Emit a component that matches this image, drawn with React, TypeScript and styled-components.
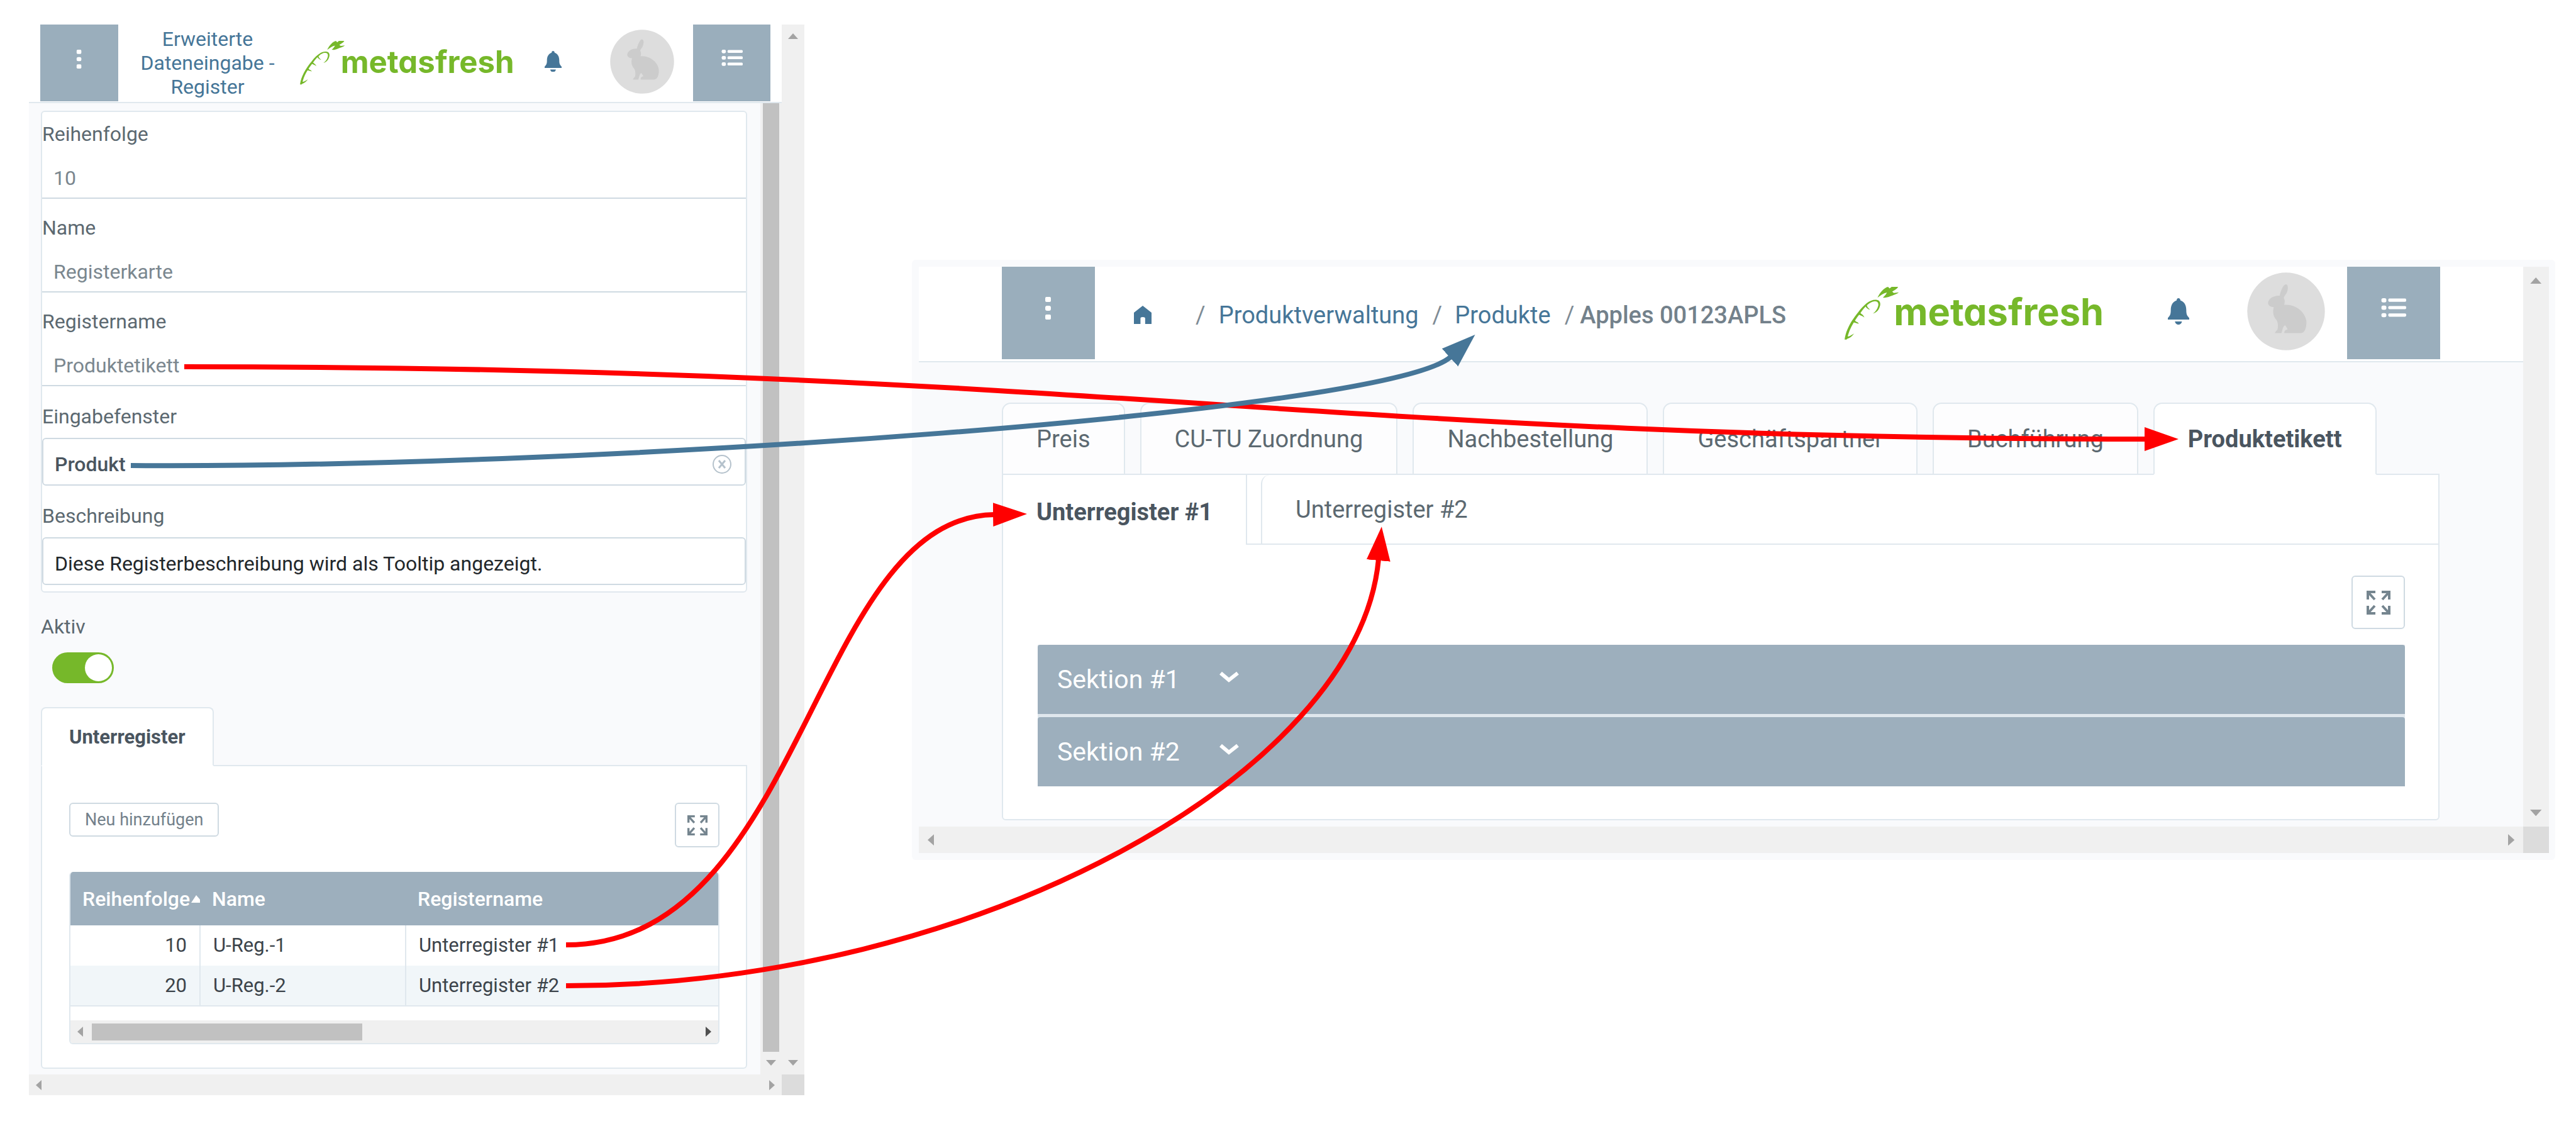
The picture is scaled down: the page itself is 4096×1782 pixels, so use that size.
import React from "react";
import styled, { createGlobalStyle, css } from "styled-components";

const c = {
  steel: "#9aaebc",
  steelSoft: "#9dafbd",
  blue: "#467698",
  green: "#76b82a",
  page: "#f9fafc",
  line: "#e0e8ee",
  lineStrong: "#cfdae2",
  label: "#5c6971",
  value: "#7b878f",
  strong: "#4a555f",
  track: "#f0f0f0",
  thumb: "#c1c1c1",
};

const Global = createGlobalStyle`
  *, *::before, *::after { box-sizing: border-box; }
  body { margin: 0; background: #fff; font-family: Roboto, "Liberation Sans", sans-serif; }
  button, input { font: inherit; color: inherit; margin: 0; }
  button { cursor: pointer; padding: 0; border: 0; background: none; }
  a { color: inherit; text-decoration: none; }
  svg { display: block; flex: none; }
`;

const Page = styled.main`
  position: relative;
  display: flex;
  align-items: flex-start;
  gap: 171px;
  min-height: 100vh;
  padding: 39px 33px 41px 46px;
`;

/* ---------- window frames and scroll bars ---------- */

const Frame = styled.section<{ $bar: number; $foot: number }>`
  display: grid;
  grid-template-columns: minmax(0, 1fr) ${(p) => p.$bar}px;
  grid-template-rows: auto ${(p) => p.$foot}px;
`;

const EditorWindow = styled.div`
  flex: 1233 1 0;
  min-width: 0;
`;

const ProductWindow = styled.div`
  flex: 2592 1 0;
  min-width: 0;
  margin-top: 374px;
  padding: 11px 10px 11px 11px;
  border-radius: 6px;
  background: ${c.page};
`;

const View = styled.div`
  display: flex;
  flex-direction: column;
  background: ${c.page};
`;

const Track = styled.div<{ $vertical?: boolean; $pad?: number }>`
  display: flex;
  flex-direction: ${(p) => (p.$vertical ? "column" : "row")};
  align-items: center;
  justify-content: space-between;
  padding: ${(p) => (p.$vertical ? `${p.$pad ?? 14}px 0` : `0 ${p.$pad ?? 11}px`)};
  background: ${c.track};
`;

const Corner = styled.div`
  background: #dcdcdc;
`;

type Dir = "up" | "down" | "left" | "right";
const tri: Record<Dir, string> = {
  up: "0,9 8,0 16,9",
  down: "0,0 16,0 8,9",
  left: "9,0 0,8 9,16",
  right: "0,0 9,8 0,16",
};
const Tip = ({ dir, fill = "#a3a3a3", scale = 1 }: { dir: Dir; fill?: string; scale?: number }) => {
  const flat = dir === "up" || dir === "down";
  const w = flat ? 16 : 9;
  const h = flat ? 9 : 16;
  return (
    <svg width={w * scale} height={h * scale} viewBox={`0 0 ${w} ${h}`} aria-hidden="true">
      <polygon points={tri[dir]} fill={fill} />
    </svg>
  );
};

/* ---------- header ---------- */

const Header = styled.header<{ $side: number; $gap: number }>`
  display: flex;
  align-items: center;
  padding: 0 ${(p) => p.$side}px ${(p) => p.$gap}px;
  border-bottom: 2px solid ${c.line};
  background: #fff;
`;

const Tile = styled.button<{ $w: number; $h: number; $lift: number }>`
  display: flex;
  flex: none;
  align-items: center;
  justify-content: center;
  width: ${(p) => p.$w}px;
  height: ${(p) => p.$h}px;
  padding-bottom: ${(p) => p.$lift}px;
  background: ${c.steel};
`;

const Title = styled.h1`
  width: 220px;
  margin: 0 37px 0 32px;
  font-size: 32px;
  font-weight: 400;
  line-height: 38px;
  text-align: center;
  color: ${c.blue};
`;

const Tools = styled.div<{ $gap: number; $end: number }>`
  display: flex;
  align-items: center;
  gap: ${(p) => p.$gap}px;
  padding: 0 ${(p) => p.$end}px 5px 0;
`;

const Spring = styled.div`
  flex: 1;
`;

const LogoSlot = styled.div<{ $after: number }>`
  margin-right: ${(p) => p.$after}px;
`;

const Crumbs = styled.nav`
  display: flex;
  align-items: center;
  padding: 6px 0 0 62px;
  font-size: 38px;
  line-height: 44px;
  white-space: pre;
  color: ${c.blue};
`;

const HomeLink = styled.a`
  margin-right: 70px;
`;

const Slash = styled.span<{ $after: number }>`
  margin-right: ${(p) => p.$after}px;
  color: #7f8c96;
`;

const CrumbLink = styled.a`
  margin-right: 22px;
`;

const Current = styled.span`
  font-weight: 500;
  color: #73818b;
`;

const Dots = ({ size }: { size: number }) => (
  <svg width={size} height={size} viewBox="0 0 36 36" aria-hidden="true" fill="#fff">
    <rect x="13" y="0" width="9" height="8" rx="2" />
    <rect x="13" y="14" width="9" height="8" rx="3" />
    <rect x="13" y="28" width="9" height="8" rx="2" />
  </svg>
);

const ListIcon = ({ size }: { size: number }) => (
  <svg width={size} height={(size * 100) / 132} viewBox="0 0 132 100" aria-hidden="true" fill="#fff">
    {[0, 39, 78].map((y) => (
      <g key={y}>
        <rect x="2" y={y} width="26" height="22" rx="9" />
        <rect x="38" y={y + 2} width="94" height="17" rx="6" />
      </g>
    ))}
  </svg>
);

const Bell = ({ width }: { width: number }) => (
  <svg width={width} height={(width * 136) / 109} viewBox="128 183 109 136" aria-hidden="true" fill={c.blue}>
    <path d="M182 183c6 0 10 4 10 11c20 7 30 24 30 50c0 20 3 28 15 40v8H128v-8c12-12 15-20 15-40c0-26 10-43 30-50c0-7 3-11 9-11z" />
    <path d="M164 302h36c-2 10-8 16-18 16s-16-6-18-16z" />
  </svg>
);

const Avatar = ({ size }: { size: number }) => (
  <svg width={size} height={size} viewBox="536 59 406 406" role="img" aria-label="Profil">
    <circle cx="739" cy="262" r="202" fill="#ddd" />
    <path
      fill="#ccc"
      d="M706 180C712 150 726 121 739 121C752 123 750 152 741 168C735 178 728 184 727 192C733 203 733 215 729 228C790 222 845 270 845 320C845 350 835 375 815 375H730C728 365 735 357 747 355C742 345 737 338 733 334C722 342 720 360 715 375H681C683 367 690 362 694 358C698 340 698 325 690 308C672 290 668 265 675 240C660 240 645 232 645 218C647 195 675 178 706 180Z"
    />
  </svg>
);

const Wordmark = styled.text`
  font-family: Inter, Roboto, sans-serif;
  font-size: 206px;
  font-weight: 700;
  font-feature-settings: "cv11";
`;

const Logo = ({ width }: { width: number }) => (
  <svg width={width} height={(width * 290) / 1420} viewBox="105 235 1420 290" overflow="visible" fill={c.green}>
    <path d="M105 525C112 472 142 420 182 372C212 332 246 304 278 306C306 308 306 334 293 358C286 370 274 379 261 382C276 372 286 357 290 340C294 322 286 314 270 315C244 317 216 344 192 380C156 425 130 468 120 518L116 525Z" />
    <path d="M218 338L228 330C226 344 236 352 246 361C234 359 224 352 218 338Z" />
    <path d="M180 385L190 376C194 384 208 386 214 404C206 396 192 394 180 385Z" />
    <path d="M150 430L160 417C164 428 176 426 184 438C172 437 164 432 150 430Z" />
    <path d="M112 524L118 504C122 514 140 502 158 491C146 506 136 516 120 521Z" />
    <path d="M286 295C298 268 322 240 344 235L353 244L364 235H400C394 247 382 252 367 261L376 269L404 265C392 276 372 280 356 287C342 293 330 296 316 294C326 284 334 276 338 266C318 270 302 282 286 295Z" />
    <Wordmark x="376" y="447">
      metasfresh
    </Wordmark>
  </svg>
);

const Home = () => (
  <svg width="28" height="29" viewBox="817 255 94 97" aria-hidden="true">
    <path fill={c.blue} d="M864 255L911 292V352H877V322Q877 315 864 315Q852 315 852 322V352H817V292Z" />
  </svg>
);

const Expand = ({ size }: { size: number }) => (
  <svg width={size} height={size} viewBox="0 0 38 38" aria-hidden="true" fill="none" stroke="#75858f" strokeWidth="4">
    <path d="M2 14V2H14M2 2L13 14M24 2H36V14M36 2L25 14M2 24V36H14M2 36L13 24M24 36H36V24M36 36L25 24" />
  </svg>
);

/* ---------- editor form ---------- */

const EditorBody = styled.div`
  display: flex;
`;

const EditorContent = styled.div`
  flex: 1;
  min-width: 0;
  padding: 12px 21px 9px 19px;
`;

const InnerScroll = styled.div`
  display: flex;
  flex-direction: column;
  align-items: center;
  width: 34px;
  padding: 0 0 14px;
  background: ${c.track};
`;

const InnerThumb = styled.div`
  flex: 1;
  width: 26px;
  margin-bottom: 13px;
  background: ${c.thumb};
`;

const Form = styled.form`
  padding-bottom: 10px;
  border: 2px solid ${c.line};
  border-radius: 6px;
  background: #fff;
`;

const Label = styled.label`
  display: block;
  font-size: 32px;
  line-height: 36px;
  color: ${c.label};
`;

const Field = styled.div<{ $top: number }>`
  padding-top: ${(p) => p.$top}px;
`;

const LineInput = styled.input`
  display: block;
  width: 100%;
  height: 85px;
  padding: 20px 18px 0;
  border: 0;
  border-bottom: 2px solid ${c.lineStrong};
  background: none;
  font-size: 32px;
  color: ${c.value};
  outline: 0;
`;

const Box = styled.div`
  display: flex;
  align-items: center;
  height: 76px;
  margin-top: 16px;
  padding: 8px 20px 0 18px;
  border: 2px solid ${c.lineStrong};
  border-radius: 6px;
`;

const BoxInput = styled.input<{ $bold?: boolean }>`
  flex: 1;
  min-width: 0;
  padding: 0;
  border: 0;
  background: none;
  font-size: 32px;
  font-weight: ${(p) => (p.$bold ? 500 : 400)};
  line-height: 36px;
  color: ${(p) => (p.$bold ? c.strong : "#22272b")};
  outline: 0;
`;

const ActiveRow = styled.div`
  padding-top: 36px;
`;

const Toggle = styled.input`
  appearance: none;
  display: block;
  width: 98px;
  height: 49px;
  margin: 23px 0 38px 18px;
  padding: 3px;
  border-radius: 25px;
  background: ${c.green};
  &::before {
    content: "";
    display: block;
    width: 43px;
    height: 43px;
    margin-left: auto;
    border-radius: 50%;
    background: #fff;
  }
`;

/* ---------- tabs ---------- */

const Tabs = styled.div`
  position: relative;
  display: flex;
  gap: 24px;
  margin-bottom: -2px;
`;

const Tab = styled.button<{ $active?: boolean; $small?: boolean }>`
  height: ${(p) => (p.$small ? 94 : 115)}px;
  padding: 0 ${(p) => (p.$small ? 43 : 53)}px;
  border: 2px solid ${c.line};
  border-radius: ${(p) => (p.$small ? "8px 8px 0 0" : "14px 14px 0 0")};
  background: #fdfdfe;
  font-size: ${(p) => (p.$small ? 31 : 38)}px;
  white-space: nowrap;
  color: ${c.label};
  ${(p) =>
    p.$active &&
    css`
      border-bottom-color: #fff;
      background: #fff;
      font-weight: 700;
      color: ${c.strong};
    `}
`;

const Panel = styled.div`
  border: 2px solid ${c.line};
  border-radius: 0 0 6px 6px;
  background: #fff;
`;

const DetailPanel = styled(Panel)`
  padding: 58px 42px 37px 43px;
`;

const Toolbar = styled.div`
  display: flex;
  align-items: flex-start;
  justify-content: space-between;
`;

const AddButton = styled.button`
  height: 54px;
  padding: 0 23px;
  border: 2px solid ${c.lineStrong};
  border-radius: 6px;
  font-size: 27px;
  line-height: 50px;
  color: #73818b;
`;

const ExpandButton = styled.button<{ $size: number }>`
  display: flex;
  align-items: center;
  justify-content: center;
  width: ${(p) => p.$size}px;
  height: ${(p) => p.$size}px;
  margin-left: auto;
  border: 2px solid ${c.lineStrong};
  border-radius: 6px;
`;

/* ---------- detail table ---------- */

const TableBox = styled.div`
  margin-top: 39px;
  border: 2px solid ${c.line};
  border-top: 0;
  border-radius: 6px;
  overflow: hidden;
`;

const Table = styled.table`
  width: 100%;
  border-collapse: collapse;
  table-layout: fixed;
  font-size: 31px;
  line-height: 36px;
  color: #3c444b;
`;

const Head = styled.th<{ $tight?: boolean }>`
  height: 85px;
  padding: 0 ${(p) => (p.$tight ? 0 : 20)}px 0 19px;
  background: ${c.steelSoft};
  font-size: 32px;
  font-weight: 500;
  text-align: left;
  white-space: nowrap;
  color: #fff;
`;

const SortHead = styled.span`
  display: flex;
  align-items: center;
  gap: 2px;
`;

const Row = styled.tr<{ $shade?: boolean }>`
  background: ${(p) => (p.$shade ? "#f1f6f9" : "#fff")};
  &:last-child {
    border-bottom: 2px solid ${c.line};
  }
`;

const Cell = styled.td<{ $right?: boolean }>`
  height: 64px;
  padding: 0 20px;
  text-align: ${(p) => (p.$right ? "right" : "left")};
  & + & {
    border-left: 2px solid ${c.line};
  }
`;

const TableScroll = styled(Track)`
  height: 36px;
  margin-top: 22px;
`;

const TableThumb = styled.div`
  width: 430px;
  height: 27px;
  margin: 0 auto 0 14px;
  background: ${c.thumb};
`;

/* ---------- product window ---------- */

const ProductBody = styled.div`
  padding: 64px 133px 10px 132px;
`;

const SubTabs = styled.div`
  display: flex;
  height: 111px;
  border-bottom: 2px solid ${c.line};
`;

const SubTab = styled.button<{ $active?: boolean }>`
  padding: 0 53px;
  font-size: 38px;
  white-space: nowrap;
  color: ${c.label};
  ${(p) =>
    p.$active
      ? css`
          height: 111px;
          padding-top: 6px;
          border-right: 2px solid ${c.line};
          background: #fff;
          font-weight: 700;
          color: ${c.strong};
        `
      : css`
          margin-left: 22px;
          border-left: 2px solid ${c.line};
          border-top-left-radius: 14px;
        `}
`;

const SectionArea = styled.div`
  padding: 49px 53px 52px 55px;
`;

const Sections = styled.div`
  display: grid;
  gap: 5px;
  margin-top: 25px;
  background: #dfe7ed;
`;

const Section = styled.button`
  display: flex;
  align-items: center;
  height: 110px;
  padding-left: 31px;
  border-radius: 4px 4px 0 0;
  background: ${c.steelSoft};
  font-size: 41px;
  text-align: left;
  color: #fff;
`;

const SectionName = styled.span`
  width: 258px;
`;

const Chevron = () => (
  <svg width="31" height="26" viewBox="0 0 31 26" aria-hidden="true" fill="none" stroke="#fff" strokeWidth="6">
    <path d="M2 3L15 14L29 3" />
  </svg>
);

/* ---------- connector arrows ---------- */

const Overlay = styled.svg`
  position: absolute;
  top: 0;
  left: 0;
  pointer-events: none;
`;

const links = [
  { id: "r1", color: "#f00", d: "M293 583C1720 583 2100 698 3412 698" },
  { id: "b1", color: c.blue, d: "M208 740C950 745 2210 655 2307 567" },
  { id: "r2", color: "#f00", d: "M900 1502C1280 1502 1290 823 1581 818" },
  { id: "r3", color: "#f00", d: "M900 1567C1550 1567 2160 1230 2192 889" },
];

const Connectors = () => (
  <Overlay width="4096" height="1782" viewBox="0 0 4096 1782" aria-hidden="true">
    <defs>
      {["#f00", c.blue].map((color, i) => (
        <marker
          key={color}
          id={`head${i}`}
          markerUnits="userSpaceOnUse"
          markerWidth="56"
          markerHeight="40"
          refX="2"
          refY="20"
          orient="auto"
        >
          <path d="M0 1L54 20L0 39Z" fill={color} />
        </marker>
      ))}
    </defs>
    {links.map((l) => (
      <path
        key={l.id}
        d={l.d}
        fill="none"
        stroke={l.color}
        strokeWidth="8"
        markerEnd={`url(#head${l.color === "#f00" ? 0 : 1})`}
      />
    ))}
  </Overlay>
);

const rows = [
  { order: 10, name: "U-Reg.-1", tab: "Unterregister #1" },
  { order: 20, name: "U-Reg.-2", tab: "Unterregister #2" },
];

const productTabs = ["Preis", "CU-TU Zuordnung", "Nachbestellung", "Geschäftspartner", "Buchführung", "Produktetikett"];

const Editor = () => (
  <EditorWindow>
    <Frame $bar={36} $foot={33}>
      <View>
        <Header $side={18} $gap={1}>
          <Tile $w={124} $h={122} $lift={12} aria-label="Menü">
            <Dots size={30} />
          </Tile>
          <Title>Erweiterte Dateneingabe - Register</Title>
          <Logo width={339} />
          <Spring />
          <Tools $gap={77} $end={30}>
            <button aria-label="Benachrichtigungen">
              <Bell width={27} />
            </button>
            <button aria-label="Profil">
              <Avatar size={102} />
            </button>
          </Tools>
          <Tile $w={123} $h={122} $lift={16} aria-label="Seitenliste">
            <ListIcon size={34} />
          </Tile>
        </Header>
        <EditorBody>
          <EditorContent>
            <Form>
              <Field $top={17}>
                <Label htmlFor="order">Reihenfolge</Label>
                <LineInput id="order" defaultValue="10" />
              </Field>
              <Field $top={28}>
                <Label htmlFor="name">Name</Label>
                <LineInput id="name" defaultValue="Registerkarte" />
              </Field>
              <Field $top={28}>
                <Label htmlFor="tabname">Registername</Label>
                <LineInput id="tabname" defaultValue="Produktetikett" />
              </Field>
              <Field $top={30}>
                <Label htmlFor="window">Eingabefenster</Label>
                <Box>
                  <BoxInput id="window" $bold defaultValue="Produkt" />
                  <button type="button" aria-label="Leeren">
                    <svg width="32" height="32" viewBox="0 0 32 32" fill="none" stroke="#b5c2cc" strokeWidth="2">
                      <circle cx="16" cy="16" r="14" />
                      <path strokeWidth="3" d="M11 10L21 22M21 10L11 22" />
                    </svg>
                  </button>
                </Box>
              </Field>
              <Field $top={30}>
                <Label htmlFor="description">Beschreibung</Label>
                <Box>
                  <BoxInput id="description" defaultValue="Diese Registerbeschreibung wird als Tooltip angezeigt." />
                </Box>
              </Field>
            </Form>
            <ActiveRow>
              <Label htmlFor="active">Aktiv</Label>
              <Toggle id="active" type="checkbox" defaultChecked />
            </ActiveRow>
            <Tabs>
              <Tab $active $small>
                Unterregister
              </Tab>
            </Tabs>
            <DetailPanel>
              <Toolbar>
                <AddButton>Neu hinzufügen</AddButton>
                <ExpandButton $size={71} aria-label="Vergrößern">
                  <Expand size={32} />
                </ExpandButton>
              </Toolbar>
              <TableBox>
                <Table>
                  <colgroup>
                    <col style={{ width: 206 }} />
                    <col style={{ width: 327 }} />
                    <col />
                  </colgroup>
                  <thead>
                    <tr>
                      <Head $tight>
                        <SortHead>
                          Reihenfolge
                          <svg width="14" height="12" viewBox="0 0 14 12" aria-hidden="true">
                            <path d="M0 12L8 0L14 7V12Z" fill="#fff" />
                          </svg>
                        </SortHead>
                      </Head>
                      <Head>Name</Head>
                      <Head>Registername</Head>
                    </tr>
                  </thead>
                  <tbody>
                    {rows.map((r, i) => (
                      <Row key={r.order} $shade={i % 2 === 1}>
                        <Cell $right>{r.order}</Cell>
                        <Cell>{r.name}</Cell>
                        <Cell>{r.tab}</Cell>
                      </Row>
                    ))}
                  </tbody>
                </Table>
                <TableScroll>
                  <Tip dir="left" />
                  <TableThumb />
                  <Tip dir="right" fill="#505050" />
                </TableScroll>
              </TableBox>
            </DetailPanel>
          </EditorContent>
          <InnerScroll>
            <InnerThumb />
            <Tip dir="down" />
          </InnerScroll>
        </EditorBody>
      </View>
      <Track $vertical>
        <Tip dir="up" />
        <Tip dir="down" />
      </Track>
      <Track>
        <Tip dir="left" />
        <Tip dir="right" />
      </Track>
      <Corner />
    </Frame>
  </EditorWindow>
);

const Product = () => (
  <ProductWindow>
    <Frame $bar={41} $foot={42}>
      <View>
        <Header $side={132} $gap={3}>
          <Tile $w={148} $h={147} $lift={16} aria-label="Menü">
            <Dots size={36} />
          </Tile>
          <Crumbs>
            <HomeLink href="#" aria-label="Start">
              <Home />
            </HomeLink>
            <Slash $after={21}>/</Slash>
            <CrumbLink href="#">Produktverwaltung</CrumbLink>
            <Slash $after={20}>/</Slash>
            <CrumbLink href="#">Produkte</CrumbLink>
            <Slash $after={9}>/</Slash>
            <Current>Apples 00123APLS</Current>
          </Crumbs>
          <Spring />
          <LogoSlot $after={104}>
            <Logo width={410} />
          </LogoSlot>
          <Tools $gap={92} $end={35}>
            <button aria-label="Benachrichtigungen">
              <Bell width={34} />
            </button>
            <button aria-label="Profil">
              <Avatar size={124} />
            </button>
          </Tools>
          <Tile $w={148} $h={147} $lift={16} aria-label="Seitenliste">
            <ListIcon size={40} />
          </Tile>
        </Header>
        <ProductBody>
          <Tabs>
            {productTabs.map((t) => (
              <Tab key={t} $active={t === "Produktetikett"}>
                {t}
              </Tab>
            ))}
          </Tabs>
          <Panel>
            <SubTabs>
              <SubTab $active>Unterregister #1</SubTab>
              <SubTab>Unterregister #2</SubTab>
            </SubTabs>
            <SectionArea>
              <ExpandButton $size={85} aria-label="Vergrößern">
                <Expand size={38} />
              </ExpandButton>
              <Sections>
                {["Sektion #1", "Sektion #2"].map((s) => (
                  <Section key={s}>
                    <SectionName>{s}</SectionName>
                    <Chevron />
                  </Section>
                ))}
              </Sections>
            </SectionArea>
          </Panel>
        </ProductBody>
      </View>
      <Track $vertical $pad={17}>
        <Tip dir="up" scale={1.15} />
        <Tip dir="down" scale={1.15} />
      </Track>
      <Track $pad={14}>
        <Tip dir="left" scale={1.15} />
        <Tip dir="right" scale={1.15} />
      </Track>
      <Corner />
    </Frame>
  </ProductWindow>
);

export default function App() {
  return (
    <>
      <Global />
      <Page>
        <Editor />
        <Product />
        <Connectors />
      </Page>
    </>
  );
}
